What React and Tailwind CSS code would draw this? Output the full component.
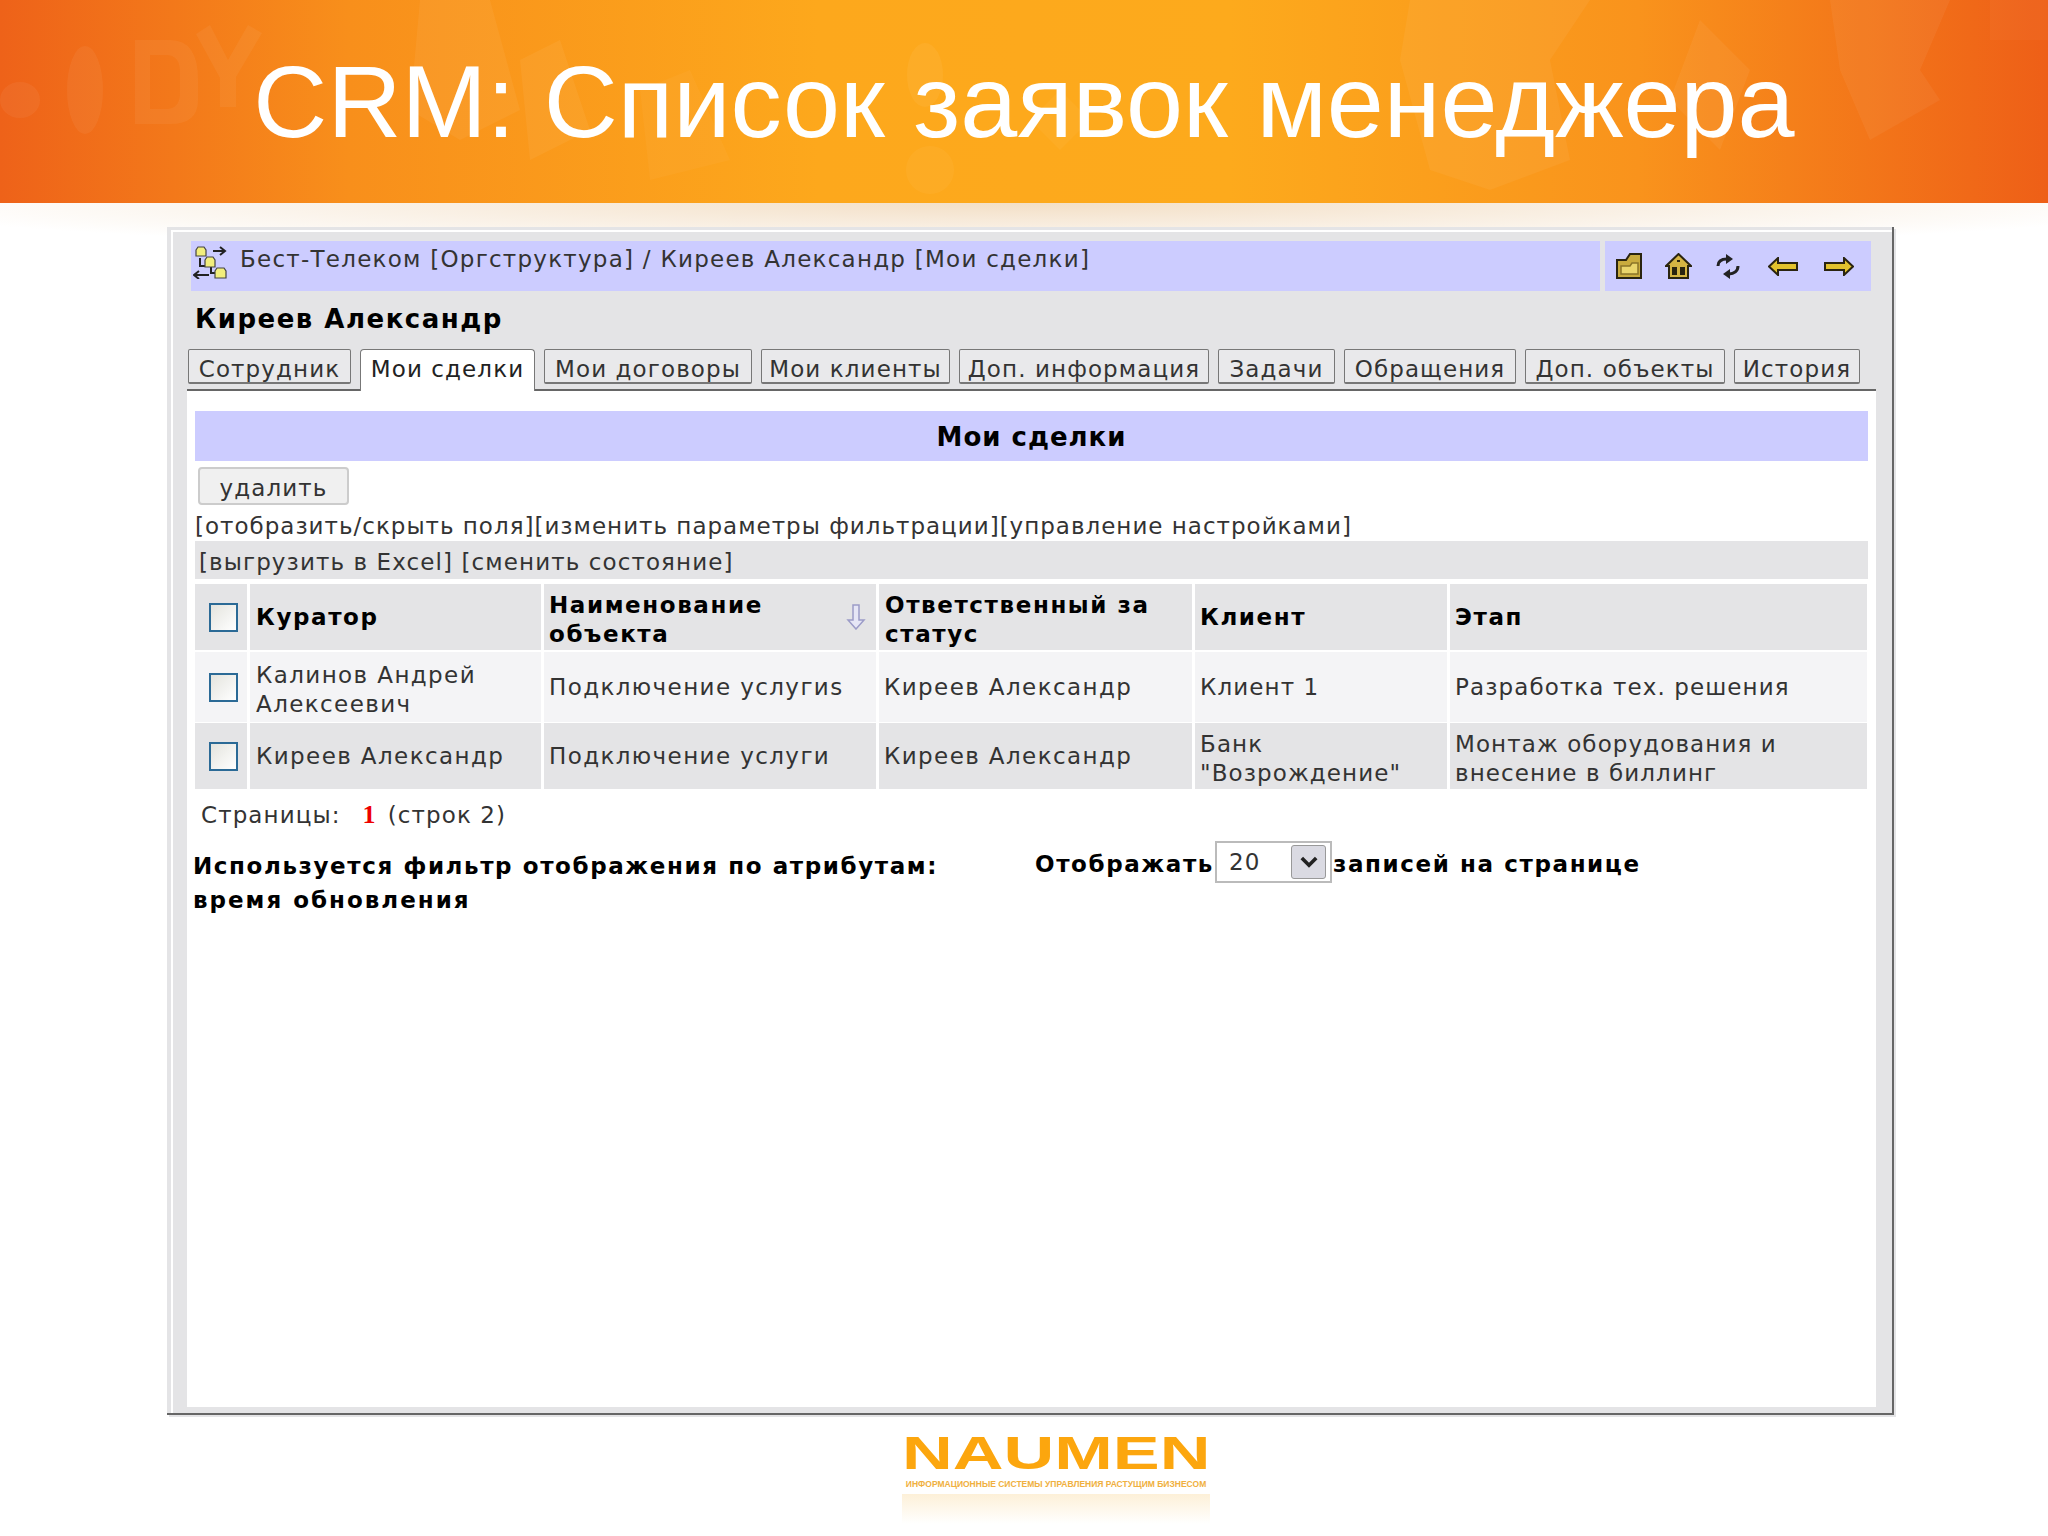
import React from "react";

const TABS = [
  { label: "Сотрудник", w: "w-[163px]" },
  { label: "Мои сделки", w: "w-[175px]", active: true },
  { label: "Мои договоры", w: "w-[208px]" },
  { label: "Мои клиенты", w: "w-[189px]" },
  { label: "Доп. информация", w: "w-[250px]" },
  { label: "Задачи", w: "w-[117px]" },
  { label: "Обращения", w: "w-[172px]" },
  { label: "Доп. объекты", w: "w-[200px]" },
  { label: "История", w: "w-[126px]" },
];

const COLS = "grid grid-cols-[52px_291px_332px_313px_252px_417px] gap-x-[3px]";

const ROWS = [
  {
    h: "h-[70px]",
    bg: "bg-[#f4f4f6]",
    cells: [["Калинов Андрей", "Алексеевич"], ["Подключение услугиs"], ["Киреев Александр"], ["Клиент 1"], ["Разработка тех. решения"]],
  },
  {
    h: "h-[66px]",
    bg: "bg-[#e4e4e6]",
    cells: [["Киреев Александр"], ["Подключение услуги"], ["Киреев Александр"], ["Банк", "\"Возрождение\""], ["Монтаж оборудования и", "внесение в биллинг"]],
  },
];

function Checkbox() {
  return <span className="block w-[29px] h-[29px] border-2 border-[#2b6a96] bg-linear-to-br from-[#e4e4de] to-white" />;
}

function TreeIcon() {
  return (
    <svg viewBox="0 0 34 33" className="w-[34px] h-[33px]">
      <g stroke="#222" strokeWidth="2" fill="none">
        <path d="M7 12v8h5M18 21v6h4" />
        <path d="M20 5h12M27 1l5 4-5 4" />
        <path d="M16 29H1M6 25l-5 4 5 4" />
      </g>
      <g fill="#f2ee7c" stroke="#444" strokeWidth="1.2">
        <path d="M3 4l2-3h6l2 3v6H3z" />
        <path d="M12 14l2-3h6l2 3v7H12z" />
        <path d="M22 25l2-3h7l2 3v7H22z" />
      </g>
    </svg>
  );
}

function NavIcons() {
  return (
    <div className="flex items-center h-full">
      <svg viewBox="0 0 26 26" className="w-[26px] h-[26px] ml-[11px]">
        <path d="M1 7h9l4-6h11v24H1z" fill="#c9ab3e" stroke="#2a2410" strokeWidth="2" />
        <path d="M5 13h9l2-3h6v11H5z" fill="#ead56c" stroke="#8a7428" strokeWidth="1.5" />
      </svg>
      <svg viewBox="0 0 27 26" className="w-[27px] h-[26px] ml-[23px]">
        <path d="M13.5 1L26 13h-3v12H4V13H1z" fill="#d5b443" stroke="#2a2410" strokeWidth="2" />
        <rect x="7" y="14" width="5" height="8" fill="#2a2410" />
        <rect x="15" y="14" width="5" height="8" fill="#2a2410" />
        <rect x="12" y="7" width="3" height="2" fill="#2a2410" />
      </svg>
      <svg viewBox="0 0 24 27" className="w-[24px] h-[27px] ml-[24px]">
        <path d="M2 13C2 8 6 6 11 6" fill="none" stroke="#222" strokeWidth="3" />
        <path d="M10 1l7 5-7 5z" fill="#222" />
        <path d="M22 13c0 5-4 8-9 8" fill="none" stroke="#222" strokeWidth="3" />
        <path d="M14 16l-7 5 7 5z" fill="#222" />
      </svg>
      <svg viewBox="0 0 30 19" className="w-[30px] h-[19px] ml-[28px]">
        <path d="M1 9.5L10 1v5h19v7H10v5z" fill="#e2c22e" stroke="#2a2410" strokeWidth="2" />
      </svg>
      <svg viewBox="0 0 30 19" className="w-[30px] h-[19px] ml-[26px]">
        <path d="M29 9.5L20 1v5H1v7h19v5z" fill="#e2c22e" stroke="#2a2410" strokeWidth="2" />
      </svg>
    </div>
  );
}

function BannerShapes() {
  return (
    <svg viewBox="0 0 2048 203" className="absolute inset-0 w-full h-full" fill="#fff" fillOpacity="0.05">
      <ellipse cx="85" cy="90" rx="18" ry="44" />
      <ellipse cx="20" cy="100" rx="20" ry="18" />
      <path d="M135 40h35q28 0 28 40v20q0 24-28 24h-35zM150 55v54h16q14 0 14-16V72q0-17-14-17z" fillRule="evenodd" />
      <path d="M210 25l18 35 20-35 14 8-26 44v30h-16V78l-24-44z" />
      <path d="M420 0h70l30 110-60 30-50-30z" />
      <path d="M520 60l40-20 30 90-60 30z" />
      <path d="M640 90l50-20 40 90-80 20z" fillOpacity="0.03" />
      <ellipse cx="925" cy="75" rx="18" ry="32" />
      <ellipse cx="930" cy="170" rx="24" ry="24" fillOpacity="0.04" />
      <path d="M1060 90l30 30-30 30-30-30z" fillOpacity="0.04" />
      <path d="M1410 0h180l-40 60 20 100-80 30-60-20-30-110z" />
      <path d="M1700 20l50 50-30 80-50-50z" />
      <path d="M1830 0h120l-30 70 20 30-70 40-30-70z" />
      <path d="M1990 0h58v40h-58z" fillOpacity="0.03" />
    </svg>
  );
}

function Logo() {
  return (
    <div className="w-[308px] ml-[902px] mt-[18px] font-['Liberation_Sans',sans-serif] font-bold tracking-normal">
      <div className="h-[40px] text-[47px] leading-[40px] text-[#fca60e] whitespace-nowrap">
        <span className="inline-block origin-left scale-x-[1.495]">NAUMEN</span>
      </div>
      <div className="mt-[5px] h-[12px] text-[8.5px] leading-[12px] text-[#f0b040] text-center whitespace-nowrap">ИНФОРМАЦИОННЫЕ СИСТЕМЫ УПРАВЛЕНИЯ РАСТУЩИМ БИЗНЕСОМ</div>
      <div className="h-[30px] mt-[4px] bg-linear-to-b from-[#fdf0d8] to-white" />
    </div>
  );
}

export default function App() {
  return (
    <div className="relative w-[2048px] h-[1536px] overflow-hidden bg-white font-['DejaVu_Sans',sans-serif] text-[#333] text-[23px] leading-[29px] tracking-[1.1px]">
      <div className="relative h-[203px] overflow-hidden bg-[linear-gradient(90deg,#ee6219_0%,#f88f1b_17%,#fda81c_40%,#fdaa1c_60%,#f9931c_80%,#ee5f17_100%)]">
        <BannerShapes />
        <h1 className="relative pt-[42px] text-center font-['Liberation_Sans',sans-serif] text-[102.5px] leading-[120px] tracking-normal text-white">CRM: Список заявок менеджера</h1>
      </div>
      <div className="absolute top-[203px] left-0 w-full h-[44px] bg-[radial-gradient(ellipse_at_top,#f3dfc6_0%,#ffffff_80%)]" />

      <div className="relative ml-[167px] mt-[24px] w-[1727px] h-[1188px] bg-[#e4e4e6] pt-[3px] pl-[4px] border-r-2 border-b-2 border-r-[#666] border-b-[#666] shadow-[2px_2px_0_#e4e4e6]">
        <div className="h-full border-t-2 border-l-2 border-white pt-[9px] pl-[14px] pr-[16px]">
          <div className="ml-[4px] w-[1680px] h-[50px] flex gap-[5px]">
            <div className="flex-1 bg-[#ccccff] flex items-start pl-[2px] pt-[5px]">
              <TreeIcon />
              <span className="ml-[13px] -mt-[1px] tracking-[1.25px]">Бест-Телеком [Оргструктура] / Киреев Александр [Мои сделки]</span>
            </div>
            <div className="w-[266px] bg-[#ccccff]">
              <NavIcons />
            </div>
          </div>

          <div className="h-[58px] pl-[8px] pt-[14px] font-bold text-[26px] tracking-[1.5px] text-black">Киреев Александр</div>

          <div className="flex gap-[9px] h-[42px] pl-[1px] items-start border-b-2 border-[#666] w-[1689px]">
            {TABS.map((t) => (
              <div
                key={t.label}
                className={t.active
                  ? `${t.w} h-[42px] bg-white text-center pt-[5px] border-t border-l border-r border-[#777] rounded-t-[4px] text-[#222]`
                  : `${t.w} h-[35px] bg-[#e9e9eb] text-center pt-[5px] border border-[#777] border-b-2 rounded-[2px]`}
              >
                {t.label}
              </div>
            ))}
          </div>

          <div className="w-[1689px] h-[1016px] bg-white px-[8px] pt-[20px]">
            <div className="h-[50px] bg-[#ccccff] flex items-center justify-center pt-[3px] font-bold text-[26px] tracking-[1px] text-black">Мои сделки</div>
            <button className="block ml-[3px] mt-[6px] w-[151px] h-[38px] bg-[#f0f0f0] border-2 border-[#ccc] rounded-[4px] text-[#333] pt-[4px]">удалить</button>
            <div className="h-[36px] pt-[7px] tracking-[1px]">[отобразить/скрыть поля][изменить параметры фильтрации][управление настройками]</div>
            <div className="h-[38px] bg-[#e4e4e6] pl-[4px] pt-[7px]">[выгрузить в Excel] [сменить состояние]</div>

            <div className={`${COLS} mt-[5px] h-[66px] font-bold tracking-[1.6px] text-black`}>
              <div className="bg-[#e4e4e6] flex items-center pl-[14px]"><Checkbox /></div>
              <div className="bg-[#e4e4e6] flex items-center pl-[6px]">Куратор</div>
              <div className="bg-[#e4e4e6] flex items-center pl-[5px] justify-between">
                <div className="pt-[5px]"><div>Наименование</div><div>объекта</div></div>
                <svg viewBox="0 0 20 26" className="w-[20px] h-[26px] mr-[10px]">
                  <path d="M7 1h6v15h5l-8 9-8-9h5z" fill="#e6e6f6" stroke="#9c9cc8" strokeWidth="1.5" />
                </svg>
              </div>
              <div className="bg-[#e4e4e6] flex items-center pl-[6px]"><div className="pt-[5px]"><div>Ответственный за</div><div>статус</div></div></div>
              <div className="bg-[#e4e4e6] flex items-center pl-[5px]">Клиент</div>
              <div className="bg-[#e4e4e6] flex items-center pl-[5px]">Этап</div>
            </div>

            {ROWS.map((r, i) => (
              <div key={i} className={`${COLS} ${r.h} ${i === 0 ? "mt-[2px]" : "mt-[1px]"}`}>
                <div className={`${r.bg} flex items-center pl-[14px]`}><Checkbox /></div>
                {r.cells.map((c, j) => (
                  <div key={j} className={`${r.bg} flex items-center ${j === 1 ? "pl-[5px]" : j === 0 ? "pl-[6px]" : "pl-[5px]"} ${j < 3 ? "tracking-[1.4px]" : ""}`}>
                    <div className={c.length > 1 ? "pt-[5px]" : ""}>
                      {c.map((l) => <div key={l}>{l}</div>)}
                    </div>
                  </div>
                ))}
              </div>
            ))}

            <div className="h-[52px] pl-[6px] pt-[11px]">
              Страницы:
              <span className="ml-[22px] font-['Liberation_Serif',serif] font-bold text-[26px] text-[#ee0000]">1</span>
              <span className="ml-[11px]">(строк 2)</span>
            </div>

            <div className="flex">
              <div className="w-[840px] -ml-[2px] pt-[8px] font-bold tracking-[1.6px] text-black leading-[34px]">
                <div>Используется фильтр отображения по атрибутам:</div>
                <div className="tracking-[2px]">время обновления</div>
              </div>
              <div className="flex items-start ml-[2px] font-bold tracking-[1.6px] text-black">
                <span className="pt-[9px]">Отображать</span>
                <div className="ml-[1px] w-[117px] h-[42px] border-2 border-[#bbb] bg-white flex items-center justify-between pl-[12px] pr-[4px] font-normal tracking-[1.1px] text-[#333]">
                  <span>20</span>
                  <span className="w-[35px] h-[34px] rounded-[3px] bg-[#dadae2] border border-[#999] flex items-center justify-center">
                    <svg viewBox="0 0 20 14" className="w-[18px] h-[13px]">
                      <path d="M2 2l8 8 8-8" fill="none" stroke="#222" strokeWidth="4" />
                    </svg>
                  </span>
                </div>
                <span className="pt-[9px] ml-[1px]">записей на странице</span>
              </div>
            </div>
          </div>
        </div>
      </div>

      <Logo />
    </div>
  );
}
